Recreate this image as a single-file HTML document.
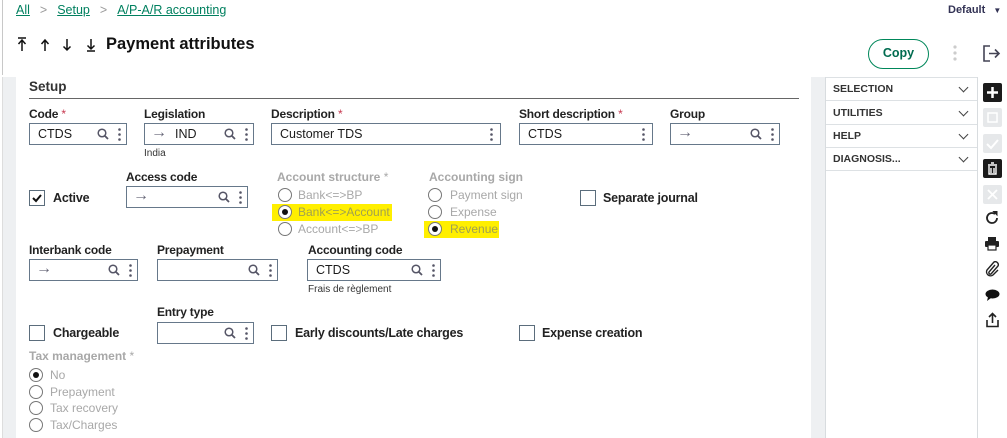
<!DOCTYPE html>
<html><head><meta charset="utf-8"><style>
*{box-sizing:border-box;margin:0;padding:0}
body{width:1007px;height:438px;overflow:hidden;background:#fff;font-family:"Liberation Sans",sans-serif;color:#1b1b1b;position:relative;font-size:12px}
.a{position:absolute;white-space:nowrap}
.lbl{font-size:12px;color:#222;font-weight:bold;letter-spacing:-0.2px}
.req{color:#c7384f;font-weight:normal}
.inp{position:absolute;height:22px;border:1px solid #66788a;background:#fff;font-size:12.5px}
.inp .t{position:absolute;left:8px;top:3px}
.inp .arr{position:absolute;left:6px;top:0px;color:#667;font-size:16px}
.mag{position:absolute;top:4px;width:12px;height:12px}
.dots{position:absolute;top:4px;width:3px;height:13px}
.cb{position:absolute;width:16px;height:16px;border:1px solid #5b6d7c;background:#fff}
.rd{position:absolute;width:14px;height:14px;border:1px solid #777;border-radius:50%;background:#fff}
.rd.on::after{content:"";position:absolute;left:3px;top:3px;width:6px;height:6px;border-radius:50%;background:#111}
.dis{color:#a8a8a8;font-size:12px}
.hl{position:absolute;background:#ffef00}
.row{position:absolute;left:826px;width:151px;border-bottom:1px solid #dde1e4;font-size:10.5px;font-weight:bold;color:#333;padding-left:7px}
.chev{position:absolute;right:10px;width:7px;height:7px;border-right:1.5px solid #444;border-bottom:1.5px solid #444;transform:rotate(45deg)}
.tb{position:absolute;left:983px;width:19px;height:19px;border-radius:2px}
</style></head><body>
<div class="a" style="left:2px;top:0;width:1px;height:75px;background:#c8c8c8"></div>
<div class="a" style="left:3px;top:77px;width:13px;height:361px;background:#eef0f2"></div>
<div class="a" style="left:0;top:77px;width:3px;height:361px;background:#fff;border-right:1px solid #ddd"></div>
<div class="a" style="left:811px;top:77px;width:15px;height:361px;background:#eef0f2"></div>
<div class="a" style="left:825px;top:77px;width:1px;height:361px;background:#d8dcdf"></div>
<div class="a" style="left:977px;top:77px;width:1px;height:361px;background:#d8dcdf"></div>

<div class="a" style="left:16px;top:3px;font-size:12.5px;color:#00805f">
<span style="text-decoration:underline">All</span><span style="color:#999;margin:0 10px">&gt;</span><span style="text-decoration:underline">Setup</span><span style="color:#999;margin:0 10px">&gt;</span><span style="text-decoration:underline">A/P-A/R accounting</span></div>
<div class="a" style="left:948px;top:4px;font-size:11px;color:#335;font-weight:bold">Default <span style="font-size:8px;margin-left:5px">▼</span></div>

<svg class="a" style="left:15px;top:36px" width="85" height="16" viewBox="0 0 85 16" fill="none" stroke="#111" stroke-width="1.5">
<path d="M3 2h8M7 4v11M3.5 8L7 4l3.5 4"/>
<path d="M30 4v11M26.5 8L30 4l3.5 4"/>
<path d="M52 3v11M48.5 10.5L52 14l3.5-3.5"/>
<path d="M76 3v10M72.5 9.5L76 13l3.5-3.5M72 15h8"/>
</svg>
<div class="a" style="left:106px;top:35px;font-size:16.5px;font-weight:bold;color:#111">Payment attributes</div>

<div class="a" style="left:868px;top:39px;width:61px;height:30px;border:1.5px solid #00875a;border-radius:15px;text-align:center;line-height:27px;font-weight:bold;font-size:12.5px;color:#006b4f">Copy</div>
<svg class="a" style="left:953px;top:45px" width="4" height="16"><circle cx="2" cy="2" r="1.6" fill="#ccc"/><circle cx="2" cy="8" r="1.6" fill="#ccc"/><circle cx="2" cy="14" r="1.6" fill="#ccc"/></svg>
<svg class="a" style="left:982px;top:44px" width="19" height="19" viewBox="0 0 19 19" fill="none" stroke="#445" stroke-width="1.6"><path d="M8 2H2v15h6M7 9.5h10M13 5.5l4 4-4 4"/></svg>

<div class="a" style="left:29px;top:79px;font-size:13.5px;font-weight:bold;color:#333">Setup</div>
<div class="a" style="left:29px;top:98px;width:770px;height:1px;background:#666"></div>

<div class="a lbl" style="left:29px;top:107px">Code <span class="req">*</span></div>
<div class="inp" style="left:29px;top:123px;width:98px"><span class="t">CTDS</span><svg class="mag" style="left:67px" viewBox="0 0 12 12"><circle cx="5" cy="5" r="3.8" stroke="#556" stroke-width="1.5" fill="none"/><path d="M8 8l3 3" stroke="#556" stroke-width="1.8"/></svg><svg class="dots" style="left:88px" viewBox="0 0 3 13"><circle cx="1.5" cy="1.5" r="1.3" fill="#556"/><circle cx="1.5" cy="6.5" r="1.3" fill="#556"/><circle cx="1.5" cy="11.5" r="1.3" fill="#556"/></svg></div>

<div class="a lbl" style="left:144px;top:107px">Legislation</div>
<div class="inp" style="left:144px;top:123px;width:110px"><span class="arr">→</span><span class="t" style="left:30px">IND</span><svg class="mag" style="left:79px" viewBox="0 0 12 12"><circle cx="5" cy="5" r="3.8" stroke="#556" stroke-width="1.5" fill="none"/><path d="M8 8l3 3" stroke="#556" stroke-width="1.8"/></svg><svg class="dots" style="left:100px" viewBox="0 0 3 13"><circle cx="1.5" cy="1.5" r="1.3" fill="#556"/><circle cx="1.5" cy="6.5" r="1.3" fill="#556"/><circle cx="1.5" cy="11.5" r="1.3" fill="#556"/></svg></div>
<div class="a" style="left:144px;top:148px;font-size:10px;color:#333">India</div>

<div class="a lbl" style="left:271px;top:107px">Description <span class="req">*</span></div>
<div class="inp" style="left:271px;top:123px;width:230px"><span class="t">Customer TDS</span><svg class="dots" style="left:218px" viewBox="0 0 3 13"><circle cx="1.5" cy="1.5" r="1.3" fill="#556"/><circle cx="1.5" cy="6.5" r="1.3" fill="#556"/><circle cx="1.5" cy="11.5" r="1.3" fill="#556"/></svg></div>

<div class="a lbl" style="left:519px;top:107px">Short description <span class="req">*</span></div>
<div class="inp" style="left:519px;top:123px;width:134px"><span class="t">CTDS</span><svg class="dots" style="left:122px" viewBox="0 0 3 13"><circle cx="1.5" cy="1.5" r="1.3" fill="#556"/><circle cx="1.5" cy="6.5" r="1.3" fill="#556"/><circle cx="1.5" cy="11.5" r="1.3" fill="#556"/></svg></div>

<div class="a lbl" style="left:670px;top:107px">Group</div>
<div class="inp" style="left:670px;top:123px;width:110px"><span class="arr">→</span><svg class="mag" style="left:79px" viewBox="0 0 12 12"><circle cx="5" cy="5" r="3.8" stroke="#556" stroke-width="1.5" fill="none"/><path d="M8 8l3 3" stroke="#556" stroke-width="1.8"/></svg><svg class="dots" style="left:100px" viewBox="0 0 3 13"><circle cx="1.5" cy="1.5" r="1.3" fill="#556"/><circle cx="1.5" cy="6.5" r="1.3" fill="#556"/><circle cx="1.5" cy="11.5" r="1.3" fill="#556"/></svg></div>

<div class="cb" style="left:29px;top:190px"><svg width="14" height="14" viewBox="0 0 14 14" style="position:absolute;left:0;top:0"><path d="M3 7l3 3 5-6" stroke="#111" stroke-width="2" fill="none"/></svg></div>
<div class="a lbl" style="left:53px;top:191px;font-size:12.5px">Active</div>

<div class="a lbl" style="left:126px;top:170px">Access code</div>
<div class="inp" style="left:126px;top:186px;width:122px"><span class="arr">→</span><svg class="mag" style="left:91px" viewBox="0 0 12 12"><circle cx="5" cy="5" r="3.8" stroke="#556" stroke-width="1.5" fill="none"/><path d="M8 8l3 3" stroke="#556" stroke-width="1.8"/></svg><svg class="dots" style="left:112px" viewBox="0 0 3 13"><circle cx="1.5" cy="1.5" r="1.3" fill="#556"/><circle cx="1.5" cy="6.5" r="1.3" fill="#556"/><circle cx="1.5" cy="11.5" r="1.3" fill="#556"/></svg></div>

<div class="a dis" style="left:277px;top:170px;font-weight:bold">Account structure <span style="font-weight:normal">*</span></div>
<div class="hl" style="left:272px;top:204px;width:120px;height:17px"></div>
<div class="rd" style="left:278px;top:188px"></div><div class="a dis" style="left:298px;top:188px">Bank&lt;=&gt;BP</div>
<div class="rd on" style="left:278px;top:205px"></div><div class="a dis" style="left:298px;top:205px;color:#a0a050">Bank&lt;=&gt;Account</div>
<div class="rd" style="left:278px;top:222px"></div><div class="a dis" style="left:298px;top:222px">Account&lt;=&gt;BP</div>

<div class="a dis" style="left:429px;top:170px;font-weight:bold">Accounting sign</div>
<div class="hl" style="left:424px;top:221px;width:75px;height:17px"></div>
<div class="rd" style="left:428px;top:188px"></div><div class="a dis" style="left:450px;top:188px">Payment sign</div>
<div class="rd" style="left:428px;top:205px"></div><div class="a dis" style="left:450px;top:205px">Expense</div>
<div class="rd on" style="left:428px;top:222px"></div><div class="a dis" style="left:450px;top:222px;color:#a0a050">Revenue</div>

<div class="cb" style="left:580px;top:190px"></div>
<div class="a lbl" style="left:603px;top:191px;font-size:12.5px">Separate journal</div>

<div class="a lbl" style="left:29px;top:243px">Interbank code</div>
<div class="inp" style="left:29px;top:259px;width:109px"><span class="arr">→</span><svg class="mag" style="left:78px" viewBox="0 0 12 12"><circle cx="5" cy="5" r="3.8" stroke="#556" stroke-width="1.5" fill="none"/><path d="M8 8l3 3" stroke="#556" stroke-width="1.8"/></svg><svg class="dots" style="left:99px" viewBox="0 0 3 13"><circle cx="1.5" cy="1.5" r="1.3" fill="#556"/><circle cx="1.5" cy="6.5" r="1.3" fill="#556"/><circle cx="1.5" cy="11.5" r="1.3" fill="#556"/></svg></div>

<div class="a lbl" style="left:157px;top:243px">Prepayment</div>
<div class="inp" style="left:157px;top:259px;width:121px"><svg class="mag" style="left:90px" viewBox="0 0 12 12"><circle cx="5" cy="5" r="3.8" stroke="#556" stroke-width="1.5" fill="none"/><path d="M8 8l3 3" stroke="#556" stroke-width="1.8"/></svg><svg class="dots" style="left:111px" viewBox="0 0 3 13"><circle cx="1.5" cy="1.5" r="1.3" fill="#556"/><circle cx="1.5" cy="6.5" r="1.3" fill="#556"/><circle cx="1.5" cy="11.5" r="1.3" fill="#556"/></svg></div>

<div class="a lbl" style="left:308px;top:243px">Accounting code</div>
<div class="inp" style="left:307px;top:259px;width:134px"><span class="t">CTDS</span><svg class="mag" style="left:103px" viewBox="0 0 12 12"><circle cx="5" cy="5" r="3.8" stroke="#556" stroke-width="1.5" fill="none"/><path d="M8 8l3 3" stroke="#556" stroke-width="1.8"/></svg><svg class="dots" style="left:124px" viewBox="0 0 3 13"><circle cx="1.5" cy="1.5" r="1.3" fill="#556"/><circle cx="1.5" cy="6.5" r="1.3" fill="#556"/><circle cx="1.5" cy="11.5" r="1.3" fill="#556"/></svg></div>
<div class="a" style="left:308px;top:284px;font-size:10px;color:#333">Frais de règlement</div>

<div class="a lbl" style="left:157px;top:305px">Entry type</div>
<div class="inp" style="left:157px;top:322px;width:97px"><svg class="mag" style="left:66px" viewBox="0 0 12 12"><circle cx="5" cy="5" r="3.8" stroke="#556" stroke-width="1.5" fill="none"/><path d="M8 8l3 3" stroke="#556" stroke-width="1.8"/></svg><svg class="dots" style="left:87px" viewBox="0 0 3 13"><circle cx="1.5" cy="1.5" r="1.3" fill="#556"/><circle cx="1.5" cy="6.5" r="1.3" fill="#556"/><circle cx="1.5" cy="11.5" r="1.3" fill="#556"/></svg></div>
<div class="cb" style="left:29px;top:325px"></div><div class="a lbl" style="left:53px;top:326px;font-size:12.5px">Chargeable</div>
<div class="cb" style="left:271px;top:325px"></div><div class="a lbl" style="left:295px;top:326px;font-size:12.5px">Early discounts/Late charges</div>
<div class="cb" style="left:519px;top:325px"></div><div class="a lbl" style="left:542px;top:326px;font-size:12.5px">Expense creation</div>

<div class="a dis" style="left:29px;top:349px;font-weight:bold">Tax management <span style="font-weight:normal">*</span></div>
<div class="rd on" style="left:29px;top:368px"></div><div class="a dis" style="left:50px;top:368px">No</div>
<div class="rd" style="left:29px;top:385px"></div><div class="a dis" style="left:50px;top:385px">Prepayment</div>
<div class="rd" style="left:29px;top:401px"></div><div class="a dis" style="left:50px;top:401px">Tax recovery</div>
<div class="rd" style="left:29px;top:418px"></div><div class="a dis" style="left:50px;top:418px">Tax/Charges</div>

<div class="a" style="left:826px;top:77px;width:151px;height:1px;background:#dde1e4"></div>
<div class="row" style="top:78px;height:23px;line-height:22px">SELECTION<span class="chev" style="top:6px"></span></div>
<div class="row" style="top:101px;height:24px;line-height:24px">UTILITIES<span class="chev" style="top:7px"></span></div>
<div class="row" style="top:125px;height:23px;line-height:22px">HELP<span class="chev" style="top:6px"></span></div>
<div class="row" style="top:148px;height:23px;line-height:22px">DIAGNOSIS...<span class="chev" style="top:6px"></span></div>

<div class="tb" style="top:83px;background:#1b1b1b"><svg width="19" height="19"><path d="M9.5 4v11M4 9.5h11" stroke="#fff" stroke-width="2.5"/></svg></div>
<div class="tb" style="top:108px;background:#e6e8ea"><svg width="19" height="19"><rect x="5" y="5" width="9" height="9" fill="none" stroke="#fff" stroke-width="1.5"/></svg></div>
<div class="tb" style="top:134px;background:#e6e8ea"><svg width="19" height="19"><path d="M4 10l4 4 7-8" stroke="#fff" stroke-width="2" fill="none"/></svg></div>
<div class="tb" style="top:159px;background:#1b1b1b"><svg width="19" height="19"><path d="M5 6h9M8 4h3M6 7v8h7V7M8 9v5M11 9v5" stroke="#fff" stroke-width="1.4" fill="none"/></svg></div>
<div class="tb" style="top:185px;background:#e6e8ea"><svg width="19" height="19"><path d="M5 5l9 9M14 5l-9 9" stroke="#fff" stroke-width="1.8"/></svg></div>
<svg class="a" style="left:984px;top:210px" width="16" height="16" viewBox="0 0 16 16"><path d="M13 8a5 5 0 1 1-2-4" stroke="#222" stroke-width="1.8" fill="none"/><path d="M9.5 1.5h3.5v3.5z" fill="#222" stroke="#222"/></svg>
<svg class="a" style="left:984px;top:236px" width="16" height="15" viewBox="0 0 16 15"><rect x="4" y="1" width="8" height="4" fill="#222"/><rect x="1" y="5" width="14" height="6" rx="1" fill="#222"/><rect x="4" y="9" width="8" height="5" fill="#fff" stroke="#222" stroke-width="1.2"/></svg>
<svg class="a" style="left:985px;top:261px" width="14" height="16" viewBox="0 0 14 16"><path d="M10 4l-6 7a1.5 1.5 0 0 0 2 2l7-8a3 3 0 0 0-4-4l-7 8a4 4 0 0 0 6 5l5-5" stroke="#222" stroke-width="1.4" fill="none"/></svg>
<svg class="a" style="left:985px;top:289px" width="15" height="12" viewBox="0 0 15 12"><ellipse cx="7.5" cy="5" rx="7" ry="4.5" fill="#111"/><path d="M3 8l-1 4 4-3z" fill="#111"/></svg>
<svg class="a" style="left:985px;top:312px" width="15" height="16" viewBox="0 0 15 16"><path d="M7.5 11V2M4 5l3.5-3.5L11 5M2 8v6.5h11V8" stroke="#222" stroke-width="1.6" fill="none"/></svg>
</body></html>
